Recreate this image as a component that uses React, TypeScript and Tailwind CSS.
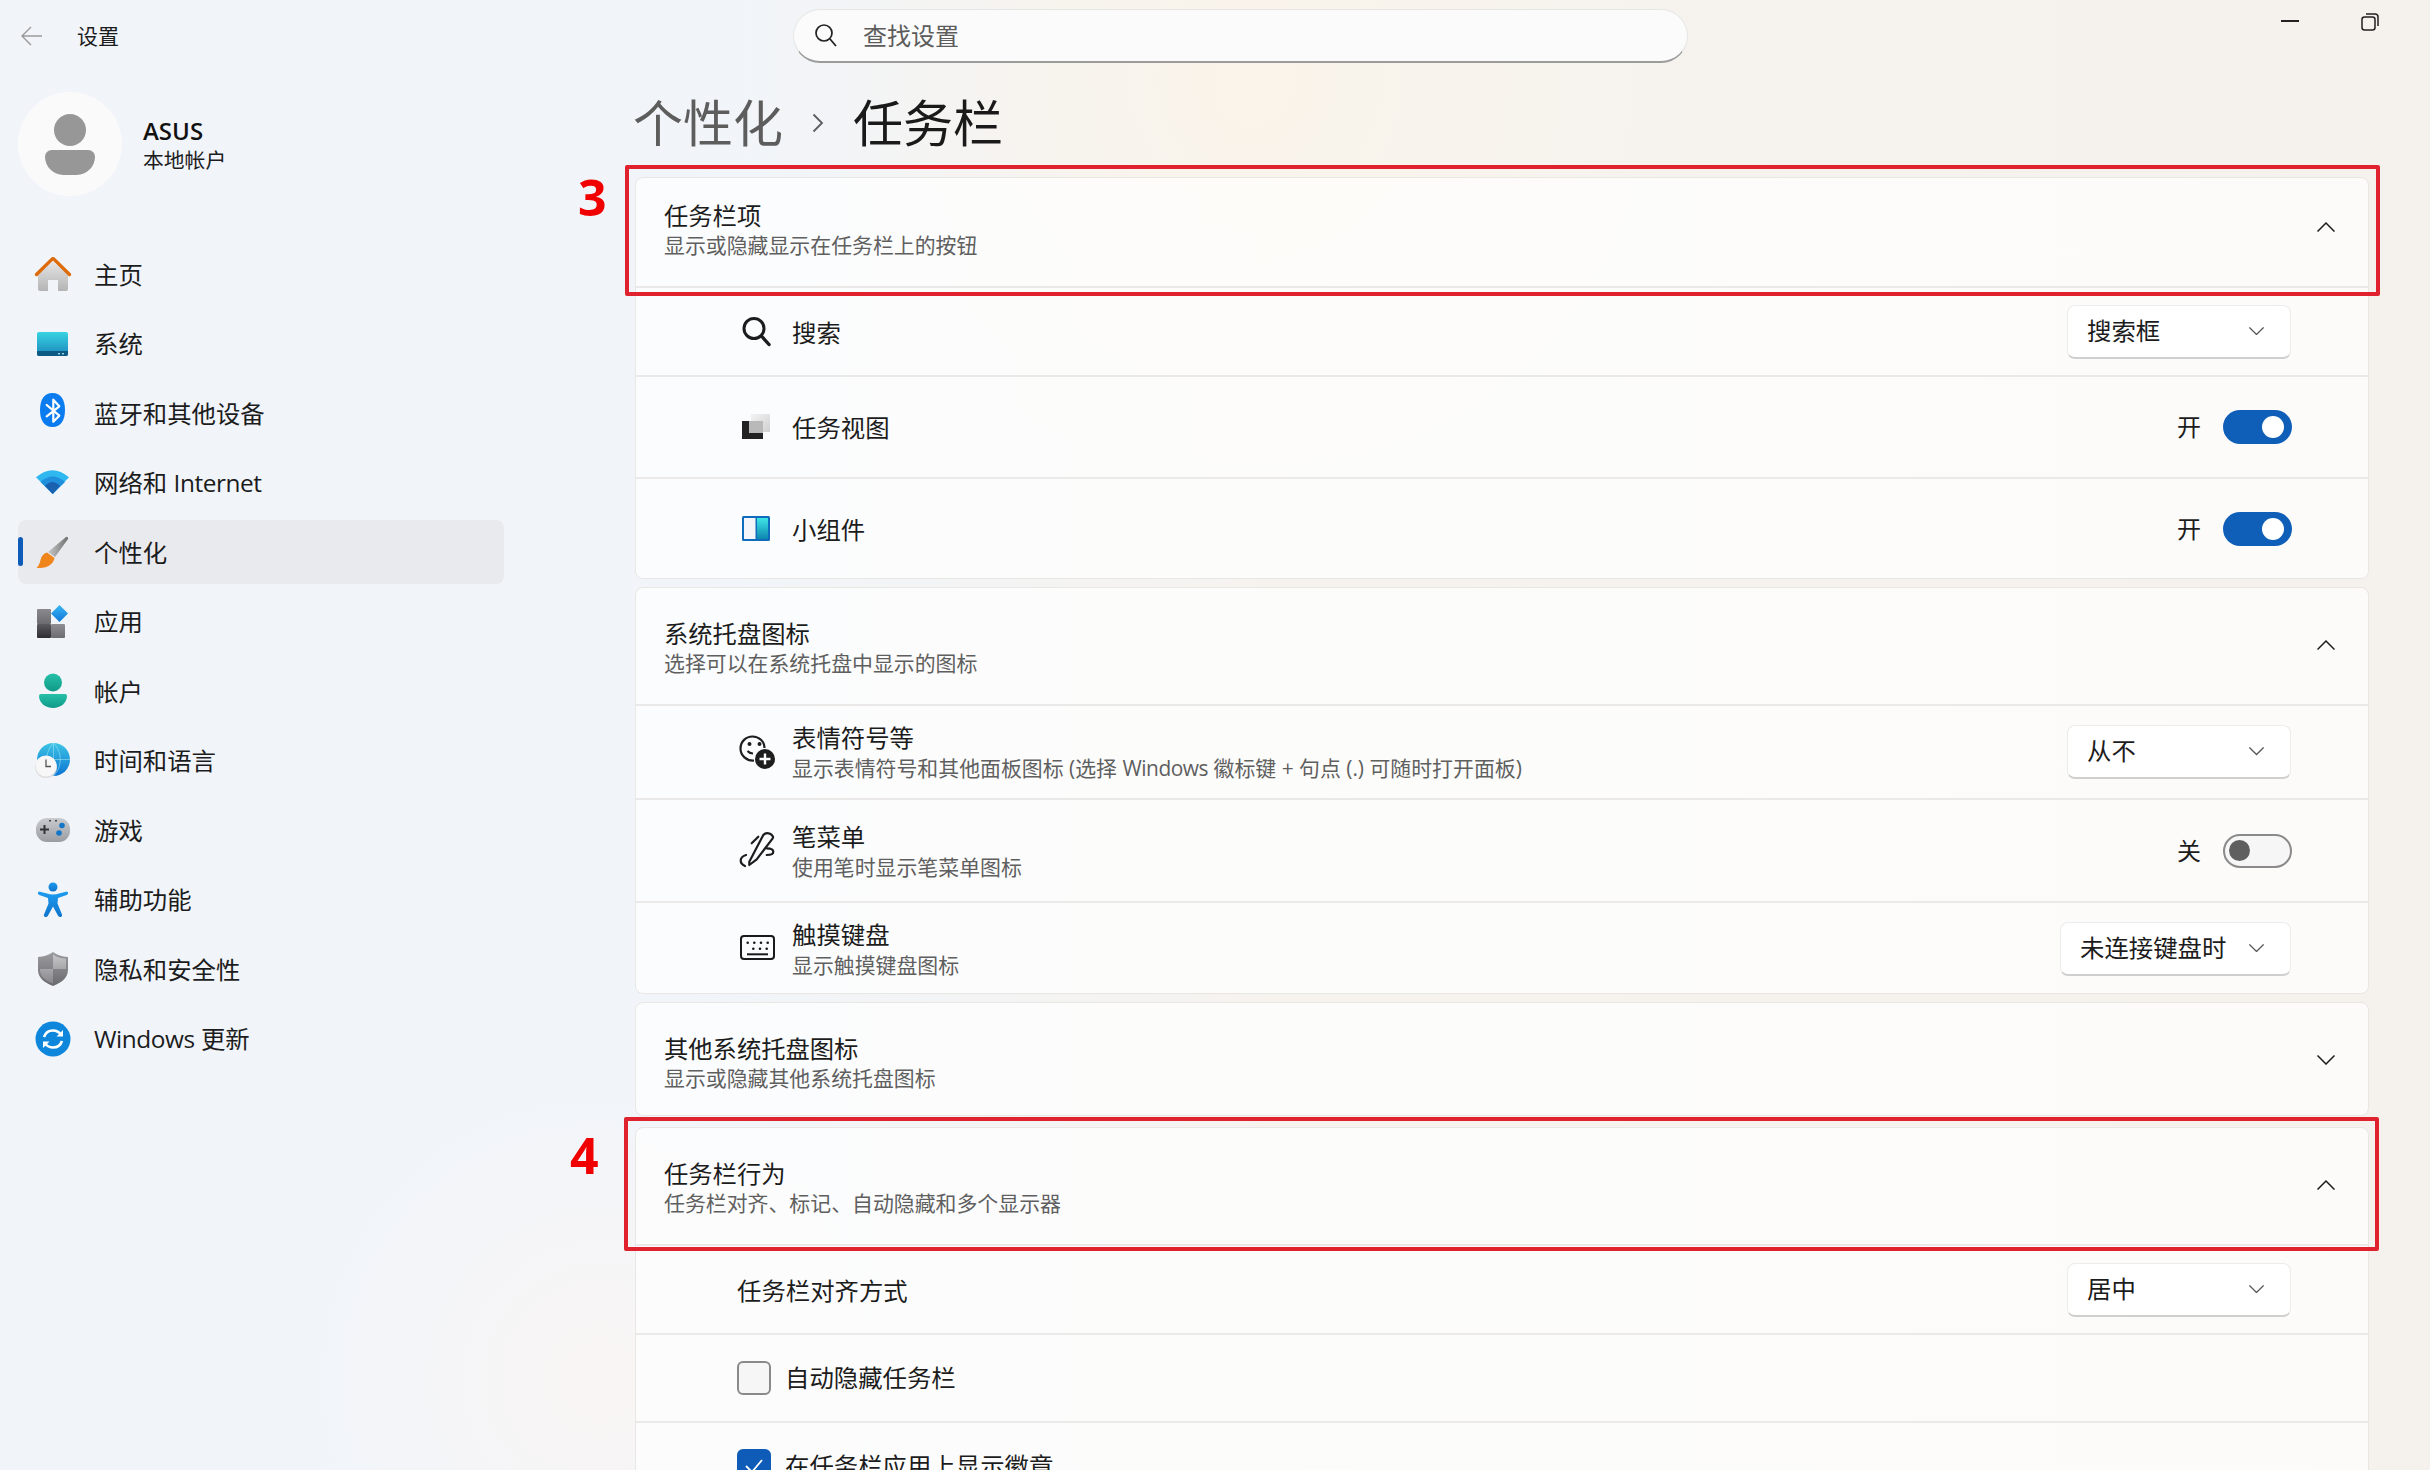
import React from "react";

const FONT = "font-['Open_Sans','Noto_Sans_CJK_SC',sans-serif]";

function Grad({ id, a, b, x2 = 0, y2 = 1 }: { id: string; a: string; b: string; x2?: number; y2?: number }) {
  return (
    <linearGradient id={id} x1="0" y1="0" x2={x2} y2={y2}>
      <stop offset="0" stopColor={a} />
      <stop offset="1" stopColor={b} />
    </linearGradient>
  );
}

const S = ({ children }: { children: React.ReactNode }) => (
  <svg width="36" height="36" viewBox="0 0 36 36" className="shrink-0 overflow-visible">
    {children}
  </svg>
);

const navIcons: Record<string, React.ReactNode> = {
  home: (
    <S>
      <defs><Grad id="h1" a="#e6e6e6" b="#b4b4b4" /></defs>
      <path d="M3 19 18 5l15 14v14a2 2 0 0 1-2 2h-8V24H13v11H5a2 2 0 0 1-2-2z" fill="url(#h1)" />
      <path d="M1.500 18.500 16.600 3.600a2 2 0 0 1 2.800 0l15.100 14.900" fill="none" stroke="#dd6b0a" strokeWidth="3.400" strokeLinecap="round" />
    </S>
  ),
  system: (
    <S>
      <defs><Grad id="s1" a="#38d3e2" b="#1c87bc" /></defs>
      <rect x="2" y="6" width="31" height="24" rx="2" fill="url(#s1)" />
      <path d="M2 25h31v3a2 2 0 0 1-2 2H4a2 2 0 0 1-2-2z" fill="#0d5a85" />
      <rect x="23" y="27" width="2" height="1.400" fill="#9fd4e6" />
      <rect x="27" y="27" width="2" height="1.400" fill="#9fd4e6" />
    </S>
  ),
  bt: (
    <S>
      <path d="M17.500-2C26-2 30 5 30 15S26 32 17.500 32 5 25 5 15 9-2 17.500-2z" fill="#0a7cf0" />
      <path d="M11.700 10 24.300 20.700 18.300 26.700V4.700L24.300 11.300 11.700 21.300" fill="none" stroke="#fff" strokeWidth="2.200" strokeLinejoin="round" strokeLinecap="round" />
    </S>
  ),
  wifi: (
    <S>
      <path d="M1 12.300Q17.500-2 34 12.300L17.700 29z" fill="#2fb7f0" />
      <path d="M5.500 17Q17.500 6 30 17L17.700 29z" fill="#2090dd" />
      <path d="M10 21Q17.500 13 25 21L17.700 29z" fill="#1a62b0" />
    </S>
  ),
  brush: (
    <S>
      <defs><Grad id="b1" a="#c9c9c9" b="#6f6f6f" x2={1} y2={0} /></defs>
      <path d="M31 3c1-.6 2.500.5 2 2L20 23l-7-5z" fill="url(#b1)" />
      <path d="M12 18.500l7.500 5.500c-1 5-5 8.500-10 9.500-2.500.5-6 .5-8 .5 2-2 3-4 4-8 .8-4 3-6.500 6.500-7.500z" fill="#f0851c" />
    </S>
  ),
  apps: (
    <S>
      <defs>
        <Grad id="a1" a="#8a8a8e" b="#6c6c70" />
        <Grad id="a2" a="#5c5c60" b="#2e2e32" />
        <Grad id="a3" a="#8f8f93" b="#6d6d71" />
        <Grad id="a4" a="#3ab6f5" b="#0f78d8" />
      </defs>
      <rect x="2" y="5" width="14" height="15" fill="url(#a1)" rx="1" />
      <rect x="2" y="20" width="14" height="14" fill="url(#a2)" rx="1" />
      <rect x="16" y="20" width="14" height="14" fill="url(#a3)" rx="1" />
      <path d="M24.500 1l8.500 8.500-8.500 8.500-8.500-8.500z" fill="url(#a4)" />
    </S>
  ),
  account: (
    <S>
      <defs><Grad id="ac" a="#26c0a8" b="#109a88" /></defs>
      <circle cx="18" cy="9.500" r="9" fill="url(#ac)" />
      <path d="M6 21h24a2 2 0 0 1 2 2c0 7-6.500 12-14 12S4 30 4 23a2 2 0 0 1 2-2z" fill="url(#ac)" />
    </S>
  ),
  time: (
    <S>
      <defs><Grad id="t1" a="#3cc4e4" b="#0c74d4" /></defs>
      <circle cx="18.500" cy="16.500" r="16.500" fill="url(#t1)" />
      <path d="M18.500 0v33M2 16.500h33M18.500 0c-9 9-9 24 0 33M18.500 0c9 9 9 24 0 33" fill="none" stroke="#a5e4f2" strokeWidth=".8" opacity=".7" />
      <circle cx="11" cy="24" r="11" fill="#dcdcdc" />
      <circle cx="11" cy="23" r="10.500" fill="#f7f7f7" />
      <path d="M11 16.500v7h5" fill="none" stroke="#555" strokeWidth="1.300" />
    </S>
  ),
  game: (
    <S>
      <defs><Grad id="g1" a="#c9cbcf" b="#9a9da2" /></defs>
      <rect x="1" y="6" width="34" height="24" rx="11" fill="url(#g1)" />
      <path d="M9.500 13v9M5 17.500h9" stroke="#333" strokeWidth="2" />
      <circle cx="27" cy="13.500" r="2.800" fill="#1576c8" />
      <circle cx="24" cy="21" r="2.800" fill="#1576c8" />
      <rect x="14" y="8" width="2" height="1.500" fill="#444" />
      <rect x="20" y="8" width="2" height="1.500" fill="#444" />
    </S>
  ),
  access: (
    <S>
      <defs><Grad id="ax" a="#1d9cf0" b="#0f74cc" /></defs>
      <circle cx="18" cy="5" r="4.500" fill="url(#ax)" />
      <path d="M4 9.500c-1.500.5-1.500 3 .3 3.500l8.700 3 .5 5.500L9 32.500c-.8 2.500 2.500 3.500 3.800 1.500L18 24.500l5.200 9.500c1.300 2 4.600 1 3.800-1.500l-4.500-11 .5-5.500 8.700-3c1.800-.5 1.800-3 .3-3.500L24 11.500c-3.500 1.200-8.500 1.200-12 0z" fill="url(#ax)" />
    </S>
  ),
  shield: (
    <S>
      <defs>
        <Grad id="sh" a="#c6c6c8" b="#87878b" />
        <Grad id="sh2" a="#9c9ca0" b="#6b6b6f" />
      </defs>
      <path d="M18 1c4 3 9 4.500 15 5v13c0 8-7 13-15 16C10 32 3 27 3 19V6c6-.5 11-2 15-5z" fill="url(#sh2)" />
      <path d="M18 3.500c3.500 2.500 8 3.800 13 4.300V18H18zM18 18v14.500C10.500 30 5 25.500 5 19v-1z" fill="url(#sh)" />
    </S>
  ),
  update: (
    <S>
      <circle cx="18" cy="18" r="17.500" fill="#0e86dc" />
      <path d="M9 16c1.500-4.500 5-6.500 9-6.500 3.500 0 6 1.500 8 4M27 20c-1.500 4.500-5 6.500-9 6.500-3.500 0-6-1.500-8-4" fill="none" stroke="#fff" strokeWidth="2.600" />
      <path d="M28 9v6.500h-6.500zM8 27v-6.500h6.500z" fill="#fff" />
    </S>
  ),
};

const rowIcons: Record<string, React.ReactNode> = {
  search: (
    <S>
      <circle cx="14" cy="14.500" r="10" fill="none" stroke="#1c1c1c" strokeWidth="3" />
      <path d="M21.500 22 29 30.500" stroke="#1c1c1c" strokeWidth="3.400" strokeLinecap="round" />
    </S>
  ),
  taskview: (
    <S>
      <defs>
        <Grad id="tv1" a="#f3f3f3" b="#d0d0d0" x2={1} y2={1} />
      </defs>
      <rect x="11" y="5" width="19" height="18" fill="url(#tv1)" />
      <rect x="2" y="12" width="21" height="18" fill="#222" />
      <rect x="9" y="12" width="14" height="12" fill="#b9b9b9" />
    </S>
  ),
  widget: (
    <S>
      <defs><Grad id="w1" a="#3fe6e6" b="#0d86b0" /></defs>
      <rect x="2" y="5" width="28" height="25" rx="1.500" fill="#0f6cbd" />
      <rect x="4" y="7" width="11.500" height="21" fill="#f3f5fa" />
      <rect x="17" y="7" width="11" height="21" fill="url(#w1)" />
    </S>
  ),
  emoji: (
    <S>
      <path d="M14 26.500C6.500 27 .5 21.500.5 14.500S6 2.500 12.500 2.500c6.500 0 12 5 12 11.500" fill="none" stroke="#1e1e1e" strokeWidth="2.200" />
      <circle cx="9.500" cy="10" r="2" fill="#1e1e1e" />
      <circle cx="19.500" cy="10" r="2" fill="#1e1e1e" />
      <path d="M7.500 17c1.500 1.800 3.500 2.500 5.500 2.500" fill="none" stroke="#1e1e1e" strokeWidth="2" />
      <circle cx="25" cy="25" r="10" fill="#1e1e1e" />
      <path d="M25 19.500v11M19.500 25h11" stroke="#fff" strokeWidth="2.400" />
    </S>
  ),
  pen: (
    <S>
      <path d="M23.300 2C25 0 27.500-.5 30 .8c2.800 1.500 3.600 3.400 2.700 4.500L16.700 26.300 9.300 32 9.300 28.700z" fill="none" stroke="#1c1c1c" strokeWidth="2.200" strokeLinejoin="round" />
      <path d="M11.700 10.300 18.300 3.700" fill="none" stroke="#1c1c1c" strokeWidth="2.200" strokeLinecap="round" />
      <path d="M6 22C3 23 .7 25 .7 27.500c0 2.500 2 4.500 4.300 5.500M26.700 15.300c4 0 6.600 1 6.600 3.400 0 2-3 3.300-6.600 3.300" fill="none" stroke="#1c1c1c" strokeWidth="2.200" strokeLinecap="round" />
    </S>
  ),
  keyboard: (
    <S>
      <rect x="1" y="5" width="33" height="23" rx="3" fill="none" stroke="#1a1a1a" strokeWidth="2" />
      {[6.7, 13.3, 20, 26.7].map((x) => (
        <circle key={x} cx={x + 1} cy="11.700" r="1.300" fill="#1a1a1a" />
      ))}
      {[13.3, 20, 26.7].map((x) => (
        <circle key={x} cx={x} cy="17.800" r="1.300" fill="#1a1a1a" />
      ))}
      <path d="M7 23.300h21" stroke="#1a1a1a" strokeWidth="2" />
    </S>
  ),
};

const L = ({ children }: { children: string }) => <span className="tracking-[-0.45px]">{children}</span>;

const nav: [string, React.ReactNode][] = [
  ["home", "主页"],
  ["system", "系统"],
  ["bt", "蓝牙和其他设备"],
  ["wifi", <>网络和 <L>Internet</L></>],
  ["brush", "个性化"],
  ["apps", "应用"],
  ["account", "帐户"],
  ["time", "时间和语言"],
  ["game", "游戏"],
  ["access", "辅助功能"],
  ["shield", "隐私和安全性"],
  ["update", <><L>Windows</L> 更新</>],
];

function Chevron({ up, w = 18, color = "#1c1c1c" }: { up?: boolean; w?: number; color?: string }) {
  return (
    <svg width={w} height={w * 0.56} viewBox="0 0 18 10" className="shrink-0">
      <path d={up ? "M.5 9.500 9 1l8.500 8.500" : "M.5.500 9 9l8.500-8.500"} fill="none" stroke={color} strokeWidth="1.500" />
    </svg>
  );
}

function Dropdown({ text, wide }: { text: string; wide?: boolean }) {
  return (
    <div
      className={`flex h-[54px] items-center justify-between rounded-lg border border-[#ececec] border-b-2 border-b-[#cfcfcf] bg-white pl-[19px] pr-[26px] text-[24.4px] leading-none text-[#1c1c1c] ${
        wide ? "w-[231px]" : "w-[224px]"
      }`}
    >
      <span>{text}</span>
      <Chevron w={15} color="#555555" />
    </div>
  );
}

function Toggle({ on }: { on: boolean }) {
  return (
    <div className="-mr-px flex items-center gap-[22px]">
      <span className="text-[24px] leading-none text-[#1c1c1c]">{on ? "开" : "关"}</span>
      {on ? (
        <div className="flex h-[34px] w-[69px] items-center justify-end rounded-full bg-[#0f5fb8] pr-[8px]">
          <div className="h-[22px] w-[22px] rounded-full bg-white" />
        </div>
      ) : (
        <div className="flex h-[34px] w-[69px] items-center rounded-full border-2 border-[#8a8a8a] bg-[#f6f6f6] pl-[4px]">
          <div className="h-[21px] w-[21px] rounded-full bg-[#5f5f5f]" />
        </div>
      )}
    </div>
  );
}

function Highlight({ label, labelClass, boxClass }: { label: string; labelClass: string; boxClass: string }) {
  return (
    <>
      <div className={`pointer-events-none absolute rounded-[2px] border-4 border-[#e0222e] ${boxClass}`} />
      <div className={`absolute text-[50px] font-bold leading-none text-[#f00000] font-['Open_Sans',sans-serif] ${labelClass}`}>{label}</div>
    </>
  );
}

function Head({
  title,
  sub,
  up,
  h,
  textClass,
  chevClass,
  children,
}: {
  title: string;
  sub: string;
  up?: boolean;
  h: string;
  textClass: string;
  chevClass: string;
  children?: React.ReactNode;
}) {
  return (
    <div className={`relative flex items-center justify-between pl-[28px] pr-[33px] ${h}`}>
      <div className={`flex flex-col ${textClass}`}>
        <span className="text-[24.3px] leading-[30px] text-[#1c1c1c]">{title}</span>
        <span className="text-[20.9px] leading-[28px] text-[#5f5f5f]">{sub}</span>
      </div>
      <div className={chevClass}>
        <Chevron up={up} />
      </div>
      {children}
    </div>
  );
}

function Row({
  icon,
  title,
  sub,
  h,
  children,
}: {
  icon: string;
  title: string;
  sub?: React.ReactNode;
  h: string;
  children: React.ReactNode;
}) {
  return (
    <div className={`flex items-center justify-between border-t-2 border-[#ebe9e7] pl-[104px] pr-[77px] ${h}`}>
      <div className="flex items-center gap-[16px]">
        {rowIcons[icon]}
        <div className="flex flex-col pt-[2px]">
          <span className="text-[24.4px] leading-[30px] text-[#1c1c1c]">{title}</span>
          {sub && <span className="text-[20.9px] leading-[30px] text-[#5f5f5f]">{sub}</span>}
        </div>
      </div>
      {children}
    </div>
  );
}

const card = "rounded-lg border border-[#e9e7e4] bg-white/70";

export default function App() {
  return (
    <div
      className={`flex h-[1470px] w-[2430px] flex-col overflow-hidden bg-[radial-gradient(circle_at_1250px_80px,#faf4ea_0,transparent_420px),radial-gradient(circle_at_600px_1380px,#f9f5f4_0,transparent_300px),linear-gradient(to_right,#f1f5fa_0%,#f1f5fa_28%,#f6f3ef_52%,#f5f2ee_100%)] ${FONT}`}
    >
      <header className="flex h-[74px] shrink-0 items-start">
        <div className="flex h-[72px] w-[793px] items-center pl-[21px]">
          <svg width="21" height="20" viewBox="0 0 21 20" className="mr-[35px]">
            <path d="M10 1 1 10l9 9M1 10h20" fill="none" stroke="#9a9a9a" strokeWidth="1.400" />
          </svg>
          <span className="text-[21px] leading-none text-[#1c1c1c]">设置</span>
        </div>
        <div className="mt-[9px] flex h-[54px] w-[895px] items-center rounded-full border border-[#e6e6e6] border-b-2 border-b-[#9c9c9c] bg-[#fbfbfb] pl-[21px] text-[24px] leading-none text-[#5c5c5c]">
          <svg width="22" height="23" viewBox="0 0 22 23" className="mr-[26px]">
            <circle cx="9" cy="9" r="8" fill="none" stroke="#222" strokeWidth="1.700" />
            <path d="M15 15l6 7" stroke="#222" strokeWidth="1.800" />
          </svg>
          查找设置
        </div>
        <div className="ml-auto mt-[13px] flex items-start gap-[62px] pr-[51px]">
          <div className="mt-[7px] h-[2px] w-[18px] bg-[#222]" />
          <svg width="18" height="18" viewBox="0 0 18 18">
            <rect x="1" y="4" width="13" height="13" rx="2.500" fill="none" stroke="#222" strokeWidth="1.500" />
            <path d="M5 1h9a3 3 0 0 1 3 3v9" fill="none" stroke="#222" strokeWidth="1.500" />
          </svg>
        </div>
      </header>

      <div className="flex min-h-0 flex-1">
        <aside className="w-[635px] shrink-0 pl-[18px] pt-[18px]">
          <div className="flex items-center gap-[21px]">
            <div className="flex h-[104px] w-[104px] flex-col items-center justify-center gap-[4px] rounded-full bg-[#fafafa]">
              <div className="h-[32px] w-[32px] rounded-full bg-[#979797]" />
              <div className="h-[25px] w-[50px] rounded-b-[25px] rounded-t-[9px] bg-[#979797]" />
            </div>
            <div className="flex flex-col pt-[3px]">
              <span className="text-[24px] font-semibold leading-[30px] text-[#111]">ASUS</span>
              <span className="text-[20.800px] leading-[29px] text-[#1c1c1c]">本地帐户</span>
            </div>
          </div>
          <nav className="mt-[46px] flex w-[486px] flex-col gap-[5.5px]">
            {nav.map(([k, label]) => (
              <div
                key={k}
                className={`relative flex h-16 items-center gap-[23px] rounded-lg pl-[17px] text-[24.4px] leading-none text-[#1c1c1c] ${
                  k === "brush" ? "bg-[#e9eaee]" : ""
                }`}
              >
                {k === "brush" && <div className="absolute left-0 top-[17px] h-[29px] w-[5px] rounded-full bg-[#0f5cb8]" />}
                {navIcons[k]}
                <span className="pt-[2px]">{label}</span>
              </div>
            ))}
          </nav>
        </aside>

        <main className="w-[1734px] shrink-0">
          <div className="-ml-[2px] mb-[5px] flex h-[98px] items-center gap-[29px] text-[50px] leading-none">
            <span className="text-[#5d5d5d]">个性化</span>
            <svg width="12" height="20" viewBox="0 0 12 20">
              <path d="M1.500 1.500 10 10l-8.500 8.500" fill="none" stroke="#5d5d5d" strokeWidth="1.800" />
            </svg>
            <span className="text-[#1a1a1a]">任务栏</span>
          </div>

          <div className="flex flex-col">
            <section className={`${card} h-[402px]`}>
              <Head title="任务栏项" sub="显示或隐藏显示在任务栏上的按钮" up h="h-[108px]" textClass="pb-[4px]" chevClass="mb-[10px]">
                <Highlight label="3" boxClass="-left-[11px] -right-[12px] -top-[13px] -bottom-[10px]" labelClass="-left-[58px] -top-[6px]" />
              </Head>
              <Row icon="search" title="搜索" h="h-[89px]">
                <Dropdown text="搜索框" />
              </Row>
              <Row icon="taskview" title="任务视图" h="h-[102px]">
                <Toggle on />
              </Row>
              <Row icon="widget" title="小组件" h="h-[101px]">
                <Toggle on />
              </Row>
            </section>

            <section className={`${card} mt-[8px] h-[407px]`}>
              <Head title="系统托盘图标" sub="选择可以在系统托盘中显示的图标" up h="h-[116px]" textClass="pt-[4px]" chevClass="mb-[1px]" />
              <Row
                icon="emoji"
                title="表情符号等"
                sub={<>显示表情符号和其他面板图标 (选择 <L>Windows</L> 徽标键 + 句点 (.) 可随时打开面板)</>}
                h="h-[94px]"
              >
                <Dropdown text="从不" />
              </Row>
              <Row icon="pen" title="笔菜单" sub="使用笔时显示笔菜单图标" h="h-[103px]">
                <Toggle on={false} />
              </Row>
              <Row icon="keyboard" title="触摸键盘" sub="显示触摸键盘图标" h="h-[93px]">
                <Dropdown text="未连接键盘时" wide />
              </Row>
            </section>

            <section className={`${card} mt-[8px] h-[114px]`}>
              <Head title="其他系统托盘图标" sub="显示或隐藏其他系统托盘图标" h="h-[112px]" textClass="pt-[8px]" chevClass="mt-[2px]" />
            </section>

            <section className={`${card} mt-[11px] grow`}>
              <Head title="任务栏行为" sub="任务栏对齐、标记、自动隐藏和多个显示器" up h="h-[116px]" textClass="pt-[4px]" chevClass="mb-[2px]">
                <Highlight label="4" boxClass="-left-[12px] -right-[11px] -top-[11px] -bottom-[7px]" labelClass="-left-[66px] top-[2px]" />
              </Head>
              <div className="flex h-[89px] items-center justify-between border-t-2 border-[#ebe9e7] pl-[101px] pr-[77px] text-[24.4px] leading-none text-[#1c1c1c]">
                <span className="pt-[3px]">任务栏对齐方式</span>
                <Dropdown text="居中" />
              </div>
              <div className="flex h-[88px] items-center gap-[14px] border-t-2 border-[#ebe9e7] pl-[101px] text-[24.4px] leading-none text-[#1c1c1c]">
                <div className="h-[34px] w-[34px] rounded-[6px] border-2 border-[#8a8a8a] bg-[#f6f6f6]" />
                <span>自动隐藏任务栏</span>
              </div>
              <div className="flex h-[88px] items-center gap-[14px] border-t-2 border-[#ebe9e7] pl-[101px] text-[24.4px] leading-none text-[#1c1c1c]">
                <div className="flex h-[34px] w-[34px] items-center justify-center rounded-[6px] bg-[#0f5cb8]">
                  <svg width="20" height="16" viewBox="0 0 20 16">
                    <path d="M2 8l6 6L18 2" fill="none" stroke="#fff" strokeWidth="1.800" />
                  </svg>
                </div>
                <span>在任务栏应用上显示徽章</span>
              </div>
            </section>
          </div>
        </main>
      </div>
    </div>
  );
}
